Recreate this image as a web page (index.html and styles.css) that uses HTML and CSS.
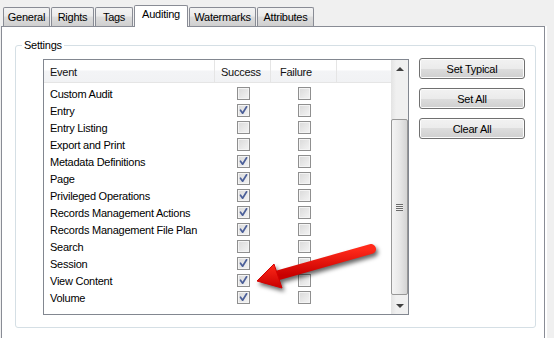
FILE: index.html
```html
<!DOCTYPE html>
<html lang="en">

<head>
    <meta charset="UTF-8">
    <title>Auditing</title>
    <link rel="stylesheet" href="styles.css">
</head>

<body>

    <div class="tabs">
        <div class="tab tab-general">General</div>
        <div class="tab tab-rights">Rights</div>
        <div class="tab tab-tags">Tags</div>
        <div class="tab tab-auditing active">Auditing</div>
        <div class="tab tab-watermarks">Watermarks</div>
        <div class="tab tab-attributes">Attributes</div>
    </div>

    <div class="panel">
        <fieldset class="group">
            <legend>Settings</legend>
            <div class="settings">
                <div class="list">
                    <div class="list-body">
                        <div class="list-header">
                            <div class="col col-event">Event</div>
                            <div class="col col-success">Success</div>
                            <div class="col col-failure">Failure</div>
                            <div class="col col-rest"></div>
                        </div>
                        <div class="rows" id="rows"></div>
                    </div>
                    <div class="scrollbar">
                        <div class="sb-btn sb-up"><span class="tri-up"></span></div>
                        <div class="sb-track">
                            <div class="sb-thumb">
                                <div class="grip"></div>
                            </div>
                        </div>
                        <div class="sb-btn sb-down"><span class="tri-down"></span></div>
                    </div>
                </div>
                <div class="buttons">
                    <button>Set Typical</button>
                    <button>Set All</button>
                    <button>Clear All</button>
                </div>
            </div>
        </fieldset>
    </div>

    <!-- red annotation arrow lying over the list -->
    <svg class="annotation" width="554" height="338" viewBox="0 0 554 338">
        <defs>
            <linearGradient id="red" x1="0" y1="0" x2="0" y2="1">
                <stop offset="0" stop-color="#ff2a1a" />
                <stop offset="1" stop-color="#c80000" />
            </linearGradient>
        </defs>
        <line x1="371" y1="249" x2="279" y2="275" stroke="url(#red)" stroke-width="10" stroke-linecap="round" />
        <polygon points="257,281 274,264 282,288" fill="url(#red)" stroke="#d40000" stroke-width="1" stroke-linejoin="round" />
    </svg>

    <script>
        // event name, success checked, failure checked
        const events = [
            ["Custom Audit", false, false],
            ["Entry", true, false],
            ["Entry Listing", false, false],
            ["Export and Print", false, false],
            ["Metadata Definitions", true, false],
            ["Page", true, false],
            ["Privileged Operations", true, false],
            ["Records Management Actions", true, false],
            ["Records Management File Plan", true, false],
            ["Search", false, false],
            ["Session", true, false],
            ["View Content", true, false],
            ["Volume", true, false]
        ];

        const tick = '<svg width="11" height="11" viewBox="0 0 11 11"><path d="M2.5 5.2 L4.6 8.2 L8.6 1.8" fill="none" stroke="#4b5f99" stroke-width="1.7" stroke-linecap="round" stroke-linejoin="round"/></svg>';

        function box(checked) {
            return '<span class="check">' + (checked ? tick : '') + '</span>';
        }

        const rows = document.getElementById("rows");
        events.forEach(function (ev) {
            const row = document.createElement("div");
            row.className = "row";
            row.innerHTML =
                '<div class="cell col-event">' + ev[0] + '</div>' +
                '<div class="cell col-success">' + box(ev[1]) + '</div>' +
                '<div class="cell col-failure">' + box(ev[2]) + '</div>';
            rows.appendChild(row);
        });
    </script>

</body>

</html>
```

FILE: styles.css
```css
body {
    font-family: "Liberation Sans", Arial, sans-serif;
    font-size: 11px;
    letter-spacing: -0.25px;
    color: #000;
    background-color: #f0f0f0;
    margin: 0;
    width: 554px;
    height: 338px;
    overflow: hidden;
    position: relative;
}

/* tab strip */

.tabs {
    display: flex;
    align-items: flex-end;
    gap: 1px;
    height: 26px;
    padding-left: 3px;
}

.tab {
    box-sizing: border-box;
    height: 19px;
    border: 1px solid #898c95;
    border-bottom: none;
    border-radius: 2px 2px 0 0;
    background: linear-gradient(#f3f3f3, #ebebeb 45%, #dddddd 50%, #cfcfcf);
    text-align: center;
    line-height: 18px;
}

.tab-general { width: 47px; }
.tab-rights { width: 43px; }
.tab-tags { width: 38px; }
.tab-auditing { width: 54px; }
.tab-watermarks { width: 67px; }
.tab-attributes { width: 57px; }

.tab.active {
    height: 22px;
    background: #fff;
    margin-bottom: -1px;
    line-height: 17px;
    position: relative;
    z-index: 1;
}

/* tab page */

.panel {
    box-sizing: border-box;
    width: 544px;
    height: 312px;
    margin-left: 1px;
    border: 1px solid #898c95;
    border-bottom: none;
    background-color: #fff;
    box-shadow: 2px 0 0 #fff;
}

.group {
    margin: 12px 8px 0 13px;
    padding: 0;
    border: 1px solid #d5dfe5;
    border-radius: 3px;
    min-width: 0;
}

.group legend {
    margin-left: 6px;
    padding: 0 2px;
    line-height: 13px;
}

.settings {
    display: flex;
    align-items: flex-start;
    gap: 10px;
    padding: 7px 10px 12px 27px;
}

/* list view */

.list {
    box-sizing: border-box;
    display: flex;
    width: 366px;
    height: 256px;
    border: 1px solid #828790;
    background-color: #fff;
}

.list-body {
    flex: 1;
}

.list-header {
    display: flex;
    height: 22px;
    border-bottom: 1px solid #e5e5e5;
    background: linear-gradient(#ffffff, #ffffff 45%, #f3f4f6 50%, #f1f2f4);
    margin-bottom: 2px;
}

.list-header .col {
    box-sizing: border-box;
    padding-top: 2px;
    line-height: 20px;
    border-right: 1px solid #e5e5e5;
    color: #111;
}

.col-event {
    width: 171px;
    padding-left: 6px;
}

.col-success {
    width: 56px;
}

.col-failure {
    width: 66px;
}

.list-header .col-success {
    padding-left: 6px;
}

.list-header .col-failure {
    padding-left: 9px;
}

.list-header .col-rest {
    flex: 1;
    border-right: none;
}

.row {
    display: flex;
    height: 17px;
    align-items: center;
}

.cell {
    box-sizing: border-box;
}

.row .col-success,
.row .col-failure {
    display: flex;
    justify-content: center;
}

.check {
    box-sizing: border-box;
    display: flex;
    align-items: center;
    justify-content: center;
    width: 13px;
    height: 13px;
    border: 1px solid #8f8f8f;
    background: linear-gradient(135deg, #d9d9d9, #f4f4f4);
    box-shadow: inset 0 0 0 1px #f4f4f4;
}

/* scrollbar */

.scrollbar {
    display: flex;
    flex-direction: column;
    width: 17px;
    background: linear-gradient(90deg, #e3e3e3, #f0f0f0 30%, #f0f0f0);
}

.sb-btn {
    height: 17px;
    display: flex;
    align-items: center;
    justify-content: center;
}

.tri-up {
    width: 0;
    height: 0;
    border-left: 4px solid transparent;
    border-right: 4px solid transparent;
    border-bottom: 4px solid #404040;
}

.tri-down {
    width: 0;
    height: 0;
    border-left: 4px solid transparent;
    border-right: 4px solid transparent;
    border-top: 4px solid #404040;
}

.sb-track {
    flex: 1;
    padding: 42px 0 2px;
}

.sb-thumb {
    box-sizing: border-box;
    height: 176px;
    border: 1px solid #979797;
    border-radius: 2px;
    background: linear-gradient(90deg, #f4f4f4, #e8e8e8 50%, #d4d4d4);
    display: flex;
    align-items: center;
    justify-content: center;
}

.grip {
    width: 7px;
    height: 7px;
    background: repeating-linear-gradient(#6a6a6a 0 1px, #f0f0f0 1px 2px);
}

/* buttons */

.buttons {
    display: flex;
    flex-direction: column;
    gap: 9px;
    margin-top: -1px;
}

button {
    box-sizing: border-box;
    width: 106px;
    height: 21px;
    border: 1px solid #707070;
    border-radius: 3px;
    background: linear-gradient(#f2f2f2, #ebebeb 50%, #dddddd 50%, #cfcfcf);
    box-shadow: inset 0 0 0 1px #fcfcfc;
    font-family: "Liberation Sans", Arial, sans-serif;
    font-size: 11px;
    letter-spacing: -0.25px;
    color: #000;
    padding: 0;
}

/* annotation */

.annotation {
    position: absolute;
    left: 0;
    top: 0;
    pointer-events: none;
    filter: drop-shadow(2px 3px 2px rgba(0, 0, 0, 0.6));
}
```
